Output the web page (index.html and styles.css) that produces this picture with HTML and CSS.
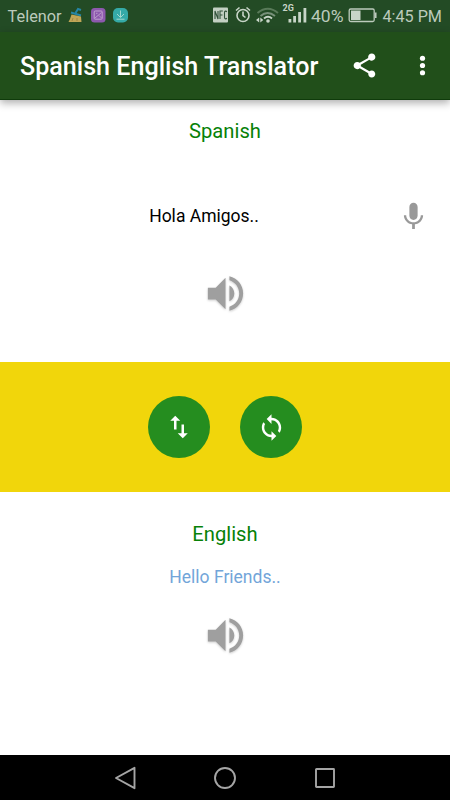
FILE: index.html
```html
<!DOCTYPE html>
<html lang="en">
<head>
<meta charset="utf-8">
<title>Spanish English Translator</title>
<link rel="stylesheet" href="styles.css">
</head>
<body>
<div class="status">
  <svg class="status-left" width="136" height="32" viewBox="0 0 136 32">
    <text x="7.6" y="21.5" textLength="54" lengthAdjust="spacingAndGlyphs">Telenor</text>
    <path d="M75.500 13l2.500-4 3 1" fill="none" stroke="#2585a5" stroke-width="2"/>
    <path d="M71 12.500l10 3" stroke="#2585a5" stroke-width="2"/>
    <path d="M71.500 14.500l9.500 2 .5 5.500H68.500l1.500-3z" fill="#c0a657"/>
    <path d="M73 18l-1 3M77 18v3" stroke="#8b7136" stroke-width=".6"/>
    <rect x="91" y="8" width="14.500" height="14.500" rx="3.500" fill="#8d59ae"/>
    <rect x="94.200" y="11" width="8" height="8.200" rx="1" fill="none" stroke="#c6acd2" stroke-width=".9"/>
    <path d="M95 18l6.500-5.500M96 13.300h1.500M99 15.500l2.500 2.500" fill="none" stroke="#c6acd2" stroke-width=".8"/>
    <rect x="113" y="8" width="15" height="14.500" rx="5" fill="#35aaa7"/>
    <path d="M120.500 10.500v6.500M117 14l3.500 3.500L124 14M116.500 19.200h8" fill="none" stroke="#a4d8ce" stroke-width="1"/>
  </svg>
  <svg class="status-right" width="240" height="32" viewBox="210 0 240 32">
    <rect x="213" y="7.500" width="15" height="15" rx="1" fill="#c3d0c3"/>
    <path d="M215 19v-8l3 8v-8M220 19v-8h2.800M220 15h2.500M226.700 12c-.4-1.200-2.200-1.200-2.200.5v5c0 1.700 1.800 1.700 2.200.5" fill="none" stroke="#31523a" stroke-width="1.100"/>
    <g fill="none" stroke="#c8d5c8" stroke-width="1.600">
      <circle cx="243" cy="15.500" r="6"/>
      <path d="M243 11.500v4l2.500 2M236 10.500l3.500-3M250 10.500l-3.500-3"/>
    </g>
    <g fill="none" stroke-width="1.900">
      <path d="M257.500 13q10.500-8.500 20.500 0" stroke="#597a59"/>
      <path d="M260.500 16q7-6 14.500 0" stroke="#78917a"/>
      <path d="M264 18.500q4-3.500 8 0" stroke="#c8d5c8"/>
    </g>
    <circle cx="268" cy="21" r="1.800" fill="#c8d5c8"/>
    <path d="M259.200 17.500v5l-3.200-2.500zM260.300 17.500v5l3-2.500z" fill="#c8d5c8"/>
    <text class="net" x="282.600" y="11.300" textLength="11.200">2G</text>
    <path d="M288.500 19h2.800v3.500h-2.800zM293.200 16h2.800v6.500h-2.800zM298.200 12h2.800v10.500h-2.800zM303.500 8h2.800v14.500h-2.800z" fill="#c8d5c8"/>
    <text x="311" y="21.500" textLength="32.500" lengthAdjust="spacingAndGlyphs">40%</text>
    <rect x="349.200" y="9" width="25" height="12.500" rx="1.500" fill="none" stroke="#bdcbbd" stroke-width="1.300"/>
    <path d="M351 10.500h9.500V20H351z" fill="#c8d5c8"/>
    <path d="M375.700 12.500v5.500" stroke="#bdcbbd" stroke-width="1.700"/>
    <text x="382.500" y="21.500" textLength="59.500" lengthAdjust="spacingAndGlyphs">4:45 PM</text>
  </svg>
</div>
<header class="appbar">
  <h1>Spanish English Translator</h1>
  <svg class="share" viewBox="0 0 24 24"><path d="M18 16.080c-.76 0-1.440.3-1.960.77L8.910 12.700c.05-.23.09-.46.09-.7s-.04-.47-.09-.7l7.050-4.110c.54.5 1.250.81 2.040.81 1.660 0 3-1.340 3-3s-1.340-3-3-3-3 1.340-3 3c0 .24.04.47.09.7L8.040 9.810C7.500 9.310 6.790 9 6 9c-1.660 0-3 1.340-3 3s1.340 3 3 3c.79 0 1.500-.31 2.040-.81l7.120 4.160c-.05.21-.08.43-.08.65 0 1.610 1.310 2.920 2.920 2.920s2.920-1.310 2.920-2.920-1.310-2.920-2.920-2.920z"/></svg>
  <svg class="more" viewBox="0 0 24 24"><circle cx="12" cy="6" r="2.150"/><circle cx="12" cy="12" r="2.150"/><circle cx="12" cy="18" r="2.150"/></svg>
</header>
<main>
  <section class="source">
    <h2>Spanish</h2>
    <div class="entry">
      <p>Hola Amigos..</p>
      <svg class="mic" viewBox="0 0 24 24"><path d="M12 14.500c1.660 0 2.990-1.340 2.990-3L15 5c0-1.660-1.340-3-3-3S9 3.340 9 5v6.500c0 1.660 1.340 3 3 3zm5.300-3.500c0 3-2.540 5.100-5.300 5.100S6.700 14 6.700 11H5c0 3.410 2.720 6.230 6 6.720V21h2v-3.280c3.280-.48 6-3.300 6-6.720h-1.700z"/></svg>
    </div>
    <svg class="speaker" viewBox="0 0 24 24"><path d="M3 9v6h4l5 5V4L7 9H3zm13.500 3c0-1.770-1.020-3.290-2.500-4.030v8.050c1.480-.73 2.500-2.250 2.500-4.020zM14 3.230v2.060c2.890.86 5 3.540 5 6.710s-2.110 5.850-5 6.710v2.060c4.010-.91 7-4.490 7-8.770s-2.990-7.860-7-8.770z"/></svg>
  </section>
  <section class="band">
    <div class="round"><svg class="swap" viewBox="0 0 24 24"><path d="M16 17.010V10h-2v7.010h-3L15 21l4-3.990h-3zM9 3L5 6.990h3V14h2V6.990h3L9 3z"/></svg></div>
    <div class="round"><svg class="loop" viewBox="0 0 24 24"><path d="M12 4V1L8 5l4 4V6c3.310 0 6 2.690 6 6 0 1.010-.25 1.970-.7 2.800l1.460 1.460C19.540 15.030 20 13.570 20 12c0-4.420-3.580-8-8-8zm0 14c-3.310 0-6-2.690-6-6 0-1.010.25-1.970.7-2.800L5.240 7.740C4.460 8.970 4 10.430 4 12c0 4.420 3.580 8 8 8v3l4-4-4-4v3z"/></svg></div>
  </section>
  <section class="target">
    <h2>English</h2>
    <p>Hello Friends..</p>
    <svg class="speaker" viewBox="0 0 24 24"><path d="M3 9v6h4l5 5V4L7 9H3zm13.500 3c0-1.770-1.020-3.290-2.500-4.030v8.050c1.480-.73 2.500-2.250 2.500-4.020zM14 3.230v2.060c2.890.86 5 3.540 5 6.710s-2.110 5.850-5 6.710v2.060c4.010-.91 7-4.490 7-8.770s-2.990-7.860-7-8.770z"/></svg>
  </section>
</main>
<nav>
  <svg viewBox="0 0 24 24"><path d="M20.500 1.800v20.400L2 12z"/></svg>
  <svg viewBox="0 0 24 24"><circle cx="12" cy="12" r="10"/></svg>
  <svg viewBox="0 0 24 24"><rect x="3" y="3" width="18" height="18" rx=".5"/></svg>
</nav>
</body>
</html>
```
FILE: styles.css
```css
* { box-sizing: border-box; }
body {
  margin: 0;
  width: 450px;
  height: 800px;
  display: flex;
  flex-direction: column;
  overflow: hidden;
  background: #fff;
  font-family: Roboto, "Liberation Sans", sans-serif;
}
svg { display: block; flex: none; }
h1, h2, p { margin: 0; font-weight: 400; }
.status {
  height: 32px;
  display: flex;
  justify-content: space-between;
  background: #234b25;
}
.status text { font-size: 17px; fill: #bccabc; }
.status .net { font-size: 9px; font-weight: 700; fill: #c8d5c8; }
.appbar {
  height: 68px;
  display: flex;
  align-items: center;
  padding: 0 13px 1px 20px;
  background: #214f1a;
  border-bottom: 1px solid #0f3b0b;
  box-shadow: 0 3px 8px rgba(0, 0, 0, .32);
  color: #fff;
  fill: #fff;
  z-index: 1;
}
h1 { flex: 1; padding-top: 3px; font-size: 25.1px; font-weight: 500; line-height: 32px; white-space: nowrap; }
.share, .more { width: 29px; height: 29px; }
.share { margin-right: 1px; }
.more { margin-left: 28px; }
main { flex: 1; display: flex; flex-direction: column; }
.source, .target { display: flex; flex-direction: column; align-items: center; }
.source { height: 262px; padding-top: 19px; }
h2 { font-size: 20.2px; line-height: 24px; color: #078107; }
.entry {
  align-self: stretch;
  display: flex;
  align-items: center;
  height: 40px;
  margin-top: 53px;
  padding-right: 20px;
}
.entry p { flex: 1; padding-left: 11px; text-align: center; font-size: 17.5px; line-height: 22px; color: #000; }
.mic { width: 33px; height: 33px; fill: #999; }
.speaker { width: 47px; height: 47px; fill: #9f9f9f; filter: drop-shadow(0 1px 1px rgba(0, 0, 0, .2)); }
.source .speaker { margin-top: 34px; }
.band {
  height: 130px;
  display: flex;
  align-items: center;
  justify-content: center;
  gap: 30px;
  background: #f1d60b;
}
.round {
  width: 62px;
  height: 62px;
  border-radius: 50%;
  display: flex;
  align-items: center;
  justify-content: center;
  background: #258d1f;
  fill: #fff;
}
.swap { width: 30px; height: 30px; }
.loop { width: 29px; height: 29px; }
.target { padding-top: 30px; }
.target p { margin-top: 20px; font-size: 17.5px; line-height: 22px; color: #72a5d9; }
.target .speaker { margin-top: 24px; }
nav {
  height: 45px;
  display: flex;
  align-items: center;
  justify-content: center;
  gap: 75.5px;
  background: #000;
}
nav svg { width: 24px; height: 24px; fill: none; stroke: #a5a5a5; stroke-width: 1.900; stroke-linejoin: round; }
```
